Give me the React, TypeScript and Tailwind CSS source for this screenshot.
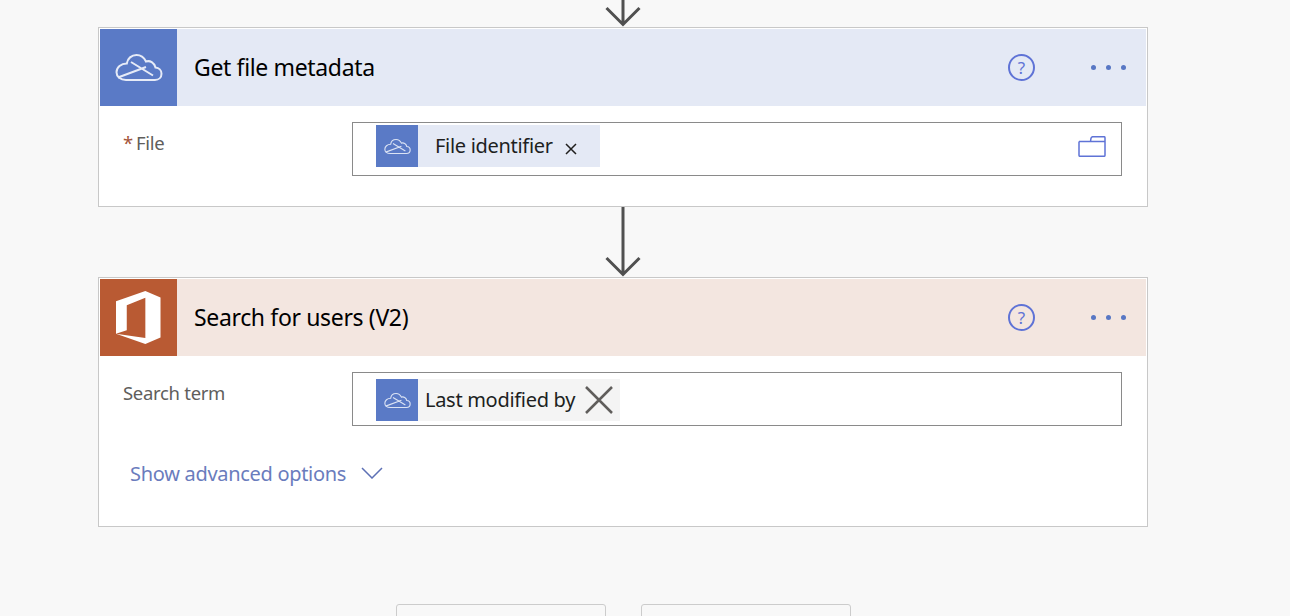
import * as React from 'react'

const font = { fontFamily: '"Noto Sans", "Open Sans", sans-serif' }

function CloudIcon(props: { className?: string }) {
  return (
    <svg viewBox="0 0 48 28" fill="none" stroke="currentColor" strokeWidth="2" className={props.className}>
      <path d="M11 26.5h29c4 0 6.5-2.8 6.5-6.3 0-3.4-2.6-6-6-6.2C39.2 9 35 6.700 31 8 28.800 3.500 25 1.500 21.500 1.500c-5 0-9 3.500-9.700 8.500C6 10 1.500 14 1.500 18.700c0 4.500 4 7.800 9.500 7.800z" />
      <path d="M3 24L31 13.500M16 8.500L38 22" />
    </svg>
  )
}

function OfficeIcon() {
  return (
    <svg viewBox="0 0 46 54" className="w-[45px] h-[53px]" fill="white">
      <path
        fillRule="evenodd"
        d="M0 10.500L30 0l15.500 6.500v41L30 54 0 43.500zM11 14.500v25.500l-11 3.500 30 4.500V6.800z"
      />
    </svg>
  )
}

function Arrow() {
  return (
    <svg viewBox="0 0 36 70" className="w-9 h-[70px] shrink-0" fill="none" stroke="#505050" strokeWidth="3">
      <path d="M18 0v67M1.500 51L18 67.500 34.500 51" />
    </svg>
  )
}

function Card(props: {
  title: string
  tint: string
  icon: React.ReactNode
  iconBg: string
  children: React.ReactNode
}) {
  return (
    <div className="w-[1050px] border border-[#c8c8c8] bg-white p-px pb-0">
      <div className={`flex items-center h-[77px] ${props.tint}`}>
        <div className={`w-[77px] h-[77px] flex items-center justify-center ${props.iconBg}`}>{props.icon}</div>
        <div className="ml-[17px] text-[23px] tracking-[-0.35px] text-black flex-1">{props.title}</div>
        <div className="w-[27px] h-[27px] mr-[56px] rounded-full border-2 border-[#5f73d6] flex items-center justify-center text-[17px] text-[#5f73d6]">
          ?
        </div>
        <div className="flex gap-[10px] mr-[20px]">
          <div className="w-[5px] h-[5px] rounded-full bg-[#5877c4]" />
          <div className="w-[5px] h-[5px] rounded-full bg-[#5877c4]" />
          <div className="w-[5px] h-[5px] rounded-full bg-[#5877c4]" />
        </div>
      </div>
      {props.children}
    </div>
  )
}

export default function App() {
  return (
    <div className="w-[1290px] h-[616px] overflow-hidden bg-[#f8f8f8] flex flex-col" style={font}>
      <div className="ml-[98px] w-[1050px] flex flex-col items-center">
        <div className="h-[27px] overflow-hidden flex flex-col justify-end">
          <Arrow />
        </div>
        <Card
          title="Get file metadata"
          tint="bg-[#e4e9f5]"
          iconBg="bg-[#5a7ac6]"
          icon={<CloudIcon className="w-[48px] h-[29px] text-[#e6ebf7]" />}
        >
          <div className="h-[100px] flex pt-[16px] pr-[24px]">
            <div className="w-[252px] pl-[23px] pt-[7px] text-[18.500px] leading-[28px] tracking-[-0.3px] text-[#605e5c]">
              <span className="text-[#a4553a] mr-[3px]">*</span>File
            </div>
            <div className="flex-1 h-[54px] border border-[#8a8a8a] flex items-start pl-[23px] pt-[2px] pr-[15px]">
              <div className="h-[42px] w-[224px] bg-[#e4e9f5] flex items-center">
                <div className="w-[42px] h-[42px] bg-[#5a7ac6] flex items-center justify-center">
                  <CloudIcon className="w-[27px] h-[17px] text-[#dbe3f4]" />
                </div>
                <span className="ml-[17px] text-[20px] tracking-[-0.3px] text-[#201f1e]">File identifier</span>
                <svg viewBox="0 0 12 12" className="w-3 h-3 ml-[12px] mt-[5px]" stroke="#201f1e" strokeWidth="1.500">
                  <path d="M1 1l10 10M11 1L1 11" />
                </svg>
              </div>
              <div className="flex-1" />
              <svg viewBox="0 0 28 21" className="w-[28px] h-[21px] mt-[11px]" fill="none" stroke="#5f73d6" strokeWidth="1.500">
                <path d="M1 5.500h26M1 5.500v13.800a1 1 0 0 0 1 1h24a1 1 0 0 0 1-1V1.700a1 1 0 0 0-1-1H15a2 2 0 0 0-2 1.500L12.500 5.500" />
              </svg>
            </div>
          </div>
        </Card>
        <div className="h-[70px]">
          <Arrow />
        </div>
        <Card title="Search for users (V2)" tint="bg-[#f3e6e0]" iconBg="bg-[#b95a33]" icon={<OfficeIcon />}>
          <div className="h-[170px] flex flex-col pt-[16px] pr-[24px]">
            <div className="flex">
              <div className="w-[252px] pl-[23px] pt-[7px] text-[18.500px] leading-[28px] tracking-[-0.3px] text-[#605e5c]">
                Search term
              </div>
              <div className="flex-1 h-[54px] border border-[#8a8a8a] flex items-start pl-[23px] pt-[6px]">
                <div className="h-[42px] w-[244px] bg-[#f4f4f4] flex items-center">
                  <div className="w-[42px] h-[42px] bg-[#5a7ac6] flex items-center justify-center">
                    <CloudIcon className="w-[27px] h-[17px] text-[#dbe3f4]" />
                  </div>
                  <span className="ml-[7px] text-[20px] tracking-[-0.3px] text-[#201f1e]">Last modified by</span>
                  <svg viewBox="0 0 30 30" className="w-[30px] h-[30px] ml-[9px]" stroke="#605e5c" strokeWidth="2.500">
                    <path d="M2 2l26 26M28 2L2 28" />
                  </svg>
                </div>
              </div>
            </div>
            <div className="flex items-center mt-[33px] ml-[30px]">
              <span className="text-[20px] tracking-[-0.3px] text-[#6a7cbd]">Show advanced options</span>
              <svg viewBox="0 0 22 12" className="w-[22px] h-3 ml-[15px] mb-[3px]" fill="none" stroke="#5d70b5" strokeWidth="1.500">
                <path d="M1 1l10 10L21 1" />
              </svg>
            </div>
          </div>
        </Card>
      </div>
      <div className="flex gap-[35px] pl-[396px] mt-[77px]">
        <div className="w-[210px] h-[40px] rounded-[3px] border border-[#cccccc] bg-[#f8f8f8]" />
        <div className="w-[210px] h-[40px] rounded-[3px] border border-[#cccccc] bg-[#f8f8f8]" />
      </div>
    </div>
  )
}
